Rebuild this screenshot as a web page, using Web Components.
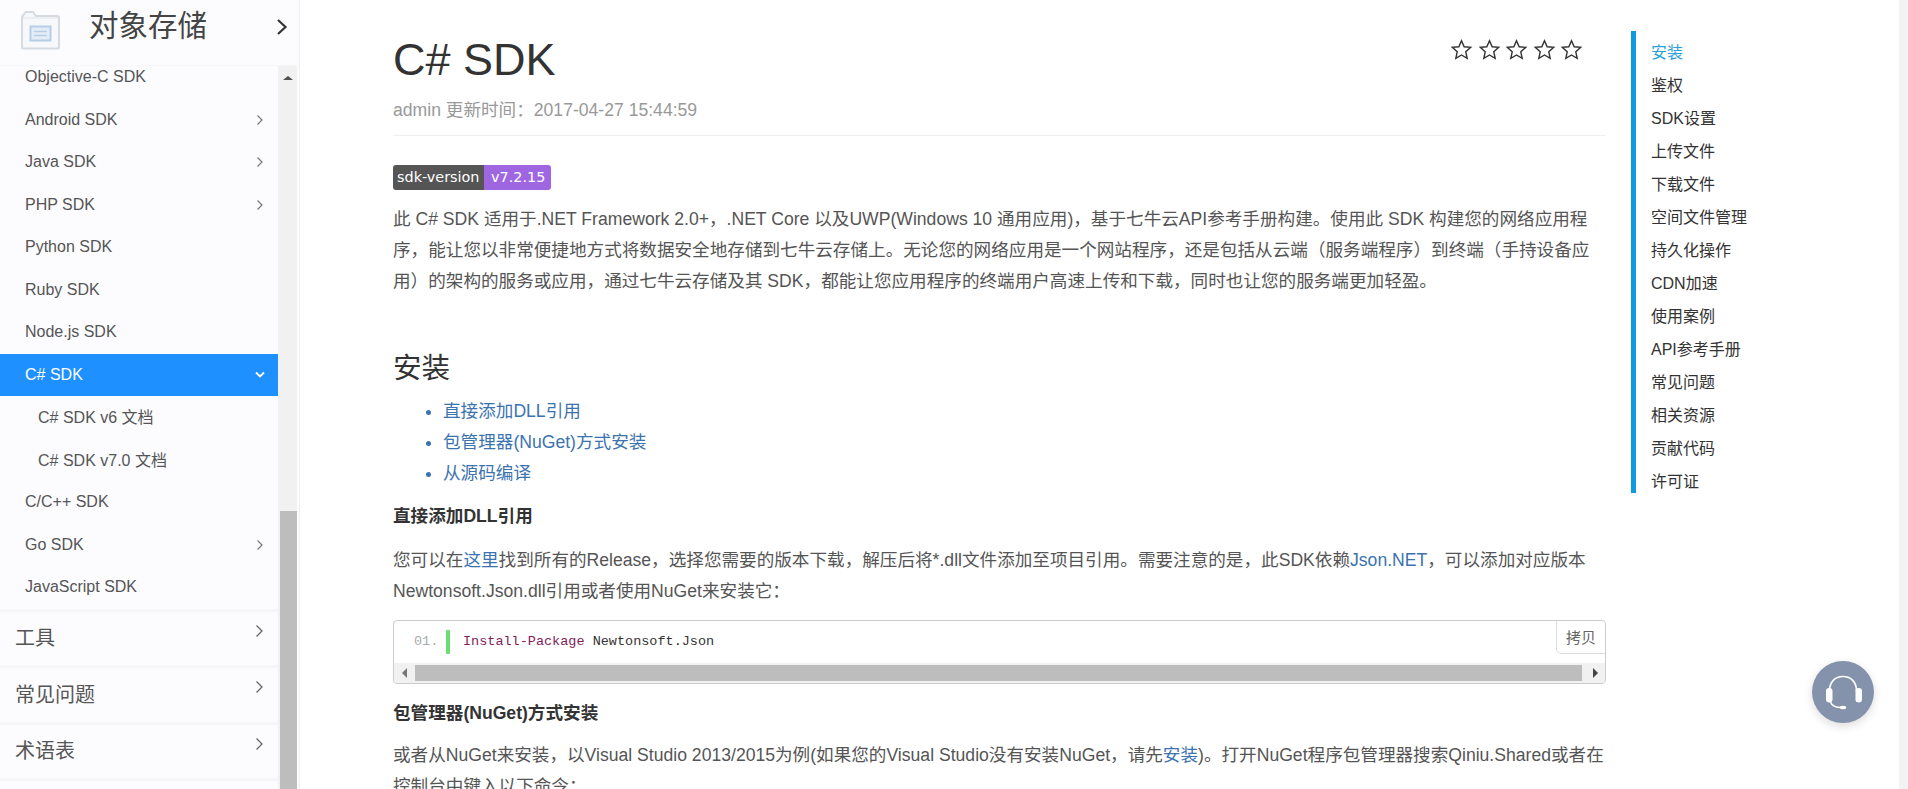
<!DOCTYPE html>
<html lang="zh">
<head>
<meta charset="utf-8">
<title>C# SDK</title>
<style>
  html, body { margin: 0; height: 100%; overflow: hidden; background: #fff; }
  body { font-family: "Liberation Sans", "Noto Sans CJK SC", sans-serif; }
</style>
</head>
<body>
<docs-page>
  <docs-sidebar slot="sidebar" title="对象存储">
    <nav-item>Objective-C SDK</nav-item>
    <nav-item arrow>Android SDK</nav-item>
    <nav-item arrow>Java SDK</nav-item>
    <nav-item arrow>PHP SDK</nav-item>
    <nav-item>Python SDK</nav-item>
    <nav-item>Ruby SDK</nav-item>
    <nav-item>Node.js SDK</nav-item>
    <nav-item active>C# SDK</nav-item>
    <nav-item sub>C# SDK v6 文档</nav-item>
    <nav-item sub>C# SDK v7.0 文档</nav-item>
    <nav-item>C/C++ SDK</nav-item>
    <nav-item arrow>Go SDK</nav-item>
    <nav-item>JavaScript SDK</nav-item>
    <nav-section first>工具</nav-section>
    <nav-section>常见问题</nav-section>
    <nav-section>术语表</nav-section>
  </docs-sidebar>

  <doc-article>
    <doc-title slot="head" meta="admin 更新时间：2017-04-27 15:44:59">C# SDK</doc-title>
    <sdk-badge label="sdk-version" value="v7.2.15"></sdk-badge>
    <doc-para class="intro">此 C# SDK 适用于.NET Framework 2.0+，.NET Core 以及UWP(Windows 10 通用应用)，基于七牛云API参考手册构建。使用此 SDK 构建您的网络应用程<br>序，能让您以非常便捷地方式将数据安全地存储到七牛云存储上。无论您的网络应用是一个网站程序，还是包括从云端（服务端程序）到终端（手持设备应<br>用）的架构的服务或应用，通过七牛云存储及其 SDK，都能让您应用程序的终端用户高速上传和下载，同时也让您的服务端更加轻盈。</doc-para>
    <doc-h2>安装</doc-h2>
    <doc-list>
      <a>直接添加DLL引用</a>
      <a>包管理器(NuGet)方式安装</a>
      <a>从源码编译</a>
    </doc-list>
    <doc-h4>直接添加DLL引用</doc-h4>
    <doc-para>您可以在<a>这里</a>找到所有的Release，选择您需要的版本下载，解压后将*.dll文件添加至项目引用。需要注意的是，此SDK依赖<a>Json.NET</a>，可以添加对应版本<br>Newtonsoft.Json.dll引用或者使用NuGet来安装它：</doc-para>
    <code-block keyword="Install-Package" rest="Newtonsoft.Json"></code-block>
    <doc-h4>包管理器(NuGet)方式安装</doc-h4>
    <doc-para class="tight">或者从NuGet来安装，以Visual Studio 2013/2015为例(如果您的Visual Studio没有安装NuGet，请先<a>安装</a>)。打开NuGet程序包管理器搜索Qiniu.Shared或者在<br>控制台中键入以下命令：</doc-para>
  </doc-article>

  <doc-toc slot="toc">
    <a class="on">安装</a><a>鉴权</a><a>SDK设置</a><a>上传文件</a><a>下载文件</a><a>空间文件管理</a><a>持久化操作</a><a>CDN加速</a><a>使用案例</a><a>API参考手册</a><a>常见问题</a><a>相关资源</a><a>贡献代码</a><a>许可证</a>
  </doc-toc>
</docs-page>
<chat-button></chat-button>

<script>
const TEXT_FONT = '"Liberation Sans", "Noto Sans CJK SC", sans-serif';

class DocsPage extends HTMLElement {
  constructor() {
    super();
    this.attachShadow({ mode: 'open' });
    this.shadowRoot.innerHTML = `
      <style>
        :host { display: flex; height: 789px; overflow: hidden; font-family: ${TEXT_FONT}; }
        .main { flex: 1; display: flex; min-width: 0; padding-left: 93px; }
        .col { width: 1213px; flex: none; }
        .toc { margin-left: 25px; flex: none; }
        .rail { width: 9px; flex: none; background: #f3f3f3; margin-left: auto; }
      </style>
      <slot name="sidebar"></slot>
      <div class="main">
        <div class="col"><slot></slot></div>
        <div class="toc"><slot name="toc"></slot></div>
      </div>
      <div class="rail"></div>
    `;
  }
}

class DocsSidebar extends HTMLElement {
  constructor() {
    super();
    this.attachShadow({ mode: 'open' });
  }

  connectedCallback() {
    const title = this.getAttribute('title');
    this.shadowRoot.innerHTML = `
      <style>
        :host { display: flex; flex-direction: column; width: 299px; flex: none; height: 789px; background: #fcfcff; border-right: 1px solid #f0f0f2; color: #555; }
        .head { height: 66px; flex: none; display: flex; align-items: center; padding-left: 20px; box-sizing: border-box; background: #fcfcfe; border-bottom: 1px solid #f6f6f8; }
        .logo { width: 41px; height: 40px; margin-top: -6px; }
        .title { margin-left: 28px; font-size: 29.500px; line-height: 40px; color: #444; margin-top: -14px; }
        .more { margin-left: auto; margin-right: 11px; margin-top: -12px; width: 12px; height: 18px; }
        .body { flex: 1; display: flex; min-height: 0; }
        .pane { width: 278px; flex: none; overflow: hidden; }
        .list { margin-top: -10px; }
        .bar { width: 19px; flex: none; background: #f1f1f1; position: relative; }
        .arrow { width: 0; height: 0; margin: 10px auto 0; border: 4px solid transparent; border-top: 0; border-bottom: 4px solid #505050; border-left-width: 5px; border-right-width: 5px; }
        .thumb { position: absolute; left: 2px; right: 0; top: 445px; bottom: 0; background: #bdbdbd; }
      </style>
      <div class="head">
        <svg class="logo" viewBox="0 0 41 40">
          <path d="M2 7.500V37a1.500 1.500 0 0 0 1.500 1.500h34A1.500 1.500 0 0 0 39 37V7.500a1.500 1.500 0 0 0-1.500-1.500H16L13 2H6L3.500 4.500z" fill="#f7f8fb" stroke="#d6dbe2" stroke-width="2"/>
          <path d="M3 8h35" stroke="#e2e5ea" stroke-width="1"/>
          <rect x="10.500" y="16.500" width="20" height="14" fill="#e4edf7" stroke="#b6cde6" stroke-width="2"/>
          <path d="M14 21.500h13M14 25.500h13" stroke="#b6cde6" stroke-width="1.500"/>
        </svg>
        <span class="title">${title}</span>
        <svg class="more" viewBox="0 0 12 18"><path d="M2 2l7.500 7L2 16" fill="none" stroke="#333" stroke-width="2.200"/></svg>
      </div>
      <div class="body">
        <div class="pane"><div class="list"><slot></slot></div></div>
        <div class="bar"><div class="arrow"></div><div class="thumb"></div></div>
      </div>
    `;
  }
}

class NavItem extends HTMLElement {
  constructor() {
    super();
    this.attachShadow({ mode: 'open' });
  }

  connectedCallback() {
    const icon = this.hasAttribute('active')
      ? '<svg viewBox="0 0 12 10" width="12" height="10"><path d="M2 2.500l4 4 4-4" fill="none" stroke="#fff" stroke-width="1.800"/></svg>'
      : this.hasAttribute('arrow')
        ? '<svg viewBox="0 0 8 12" width="8" height="12"><path d="M1.500 1.500L6 6l-4.500 4.500" fill="none" stroke="#777" stroke-width="1.200"/></svg>'
        : '';
    this.shadowRoot.innerHTML = `
      <style>
        :host { display: flex; align-items: center; box-sizing: border-box; height: 42.500px; padding: 0 14px 0 25px; font-size: 16px; color: #555; }
        :host([sub]) { padding-left: 38px; padding-bottom: 2px; }
        :host([active]) { background: #1e90ff; color: #fff; padding-right: 12px; }
        .icon { margin-left: auto; display: flex; }
      </style>
      <slot></slot><span class="icon">${icon}</span>
    `;
  }
}

class NavSection extends HTMLElement {
  constructor() {
    super();
    this.attachShadow({ mode: 'open' });
    this.shadowRoot.innerHTML = `
      <style>
        :host { display: flex; align-items: center; height: 50.500px; padding: 0 14px 3px 15px; border-bottom: 3px solid #f6f6f9; font-size: 20px; color: #555; }
        :host([first]) { border-top: 3px solid #f6f6f9; }
        svg { margin-left: auto; margin-top: -12px; }
      </style>
      <slot></slot>
      <svg viewBox="0 0 9 14" width="9" height="14"><path d="M1.500 1.500L7 7l-5.500 5.500" fill="none" stroke="#666" stroke-width="1.300"/></svg>
    `;
  }
}

class DocArticle extends HTMLElement {
  constructor() {
    super();
    this.attachShadow({ mode: 'open' });
    this.shadowRoot.innerHTML = `
      <style>
        :host { display: block; padding-top: 35px; color: #555; font-size: 17.600px; }
      </style>
      <slot name="head"></slot>
      <slot></slot>
    `;
  }
}

class DocTitle extends HTMLElement {
  constructor() {
    super();
    this.attachShadow({ mode: 'open' });
  }

  connectedCallback() {
    const meta = this.getAttribute('meta');
    const star = '<svg viewBox="0 0 24 24" width="23" height="23"><path d="M12 2.800l2.800 6.300 6.800.7-5.100 4.600 1.400 6.800-5.900-3.500-5.900 3.500 1.400-6.800-5.100-4.600 6.800-.7z" fill="none" stroke="#333" stroke-width="1.500" stroke-linejoin="miter"/></svg>';
    this.shadowRoot.innerHTML = `
      <style>
        :host { display: block; padding-bottom: 13px; border-bottom: 1px solid #f0f0f0; }
        .row { display: flex; align-items: flex-start; }
        h1 { margin: 0; font-weight: 400; font-size: 45px; line-height: 50px; color: #333; }
        .stars { margin-left: auto; margin-right: 23px; margin-top: 3px; display: flex; gap: 4.500px; }
        svg { display: block; }
        .meta { margin-top: 13px; font-size: 17.600px; line-height: 24px; color: #999; }
      </style>
      <div class="row">
        <h1><slot></slot></h1>
        <div class="stars">${star.repeat(5)}</div>
      </div>
      <div class="meta">${meta}</div>
    `;
  }
}

class SdkBadge extends HTMLElement {
  constructor() {
    super();
    this.attachShadow({ mode: 'open' });
  }

  connectedCallback() {
    this.shadowRoot.innerHTML = `
      <style>
        :host { display: flex; width: 158px; height: 25px; margin-top: 29px; border-radius: 3px; overflow: hidden; font: 14.400px/25px "DejaVu Sans", sans-serif; color: #fff; }
        .l { background: #555; width: 91px; padding-left: 4px; box-sizing: border-box; }
        .r { background: #9f66e2; flex: 1; padding-left: 7px; }
      </style>
      <span class="l">${this.getAttribute('label')}</span><span class="r">${this.getAttribute('value')}</span>
    `;
  }
}

class DocPara extends HTMLElement {
  constructor() {
    super();
    this.attachShadow({ mode: 'open' });
    this.shadowRoot.innerHTML = `
      <style>
        :host { display: block; margin-top: 13px; font-size: 17.600px; line-height: 31px; color: #555; white-space: nowrap; }
        :host(.intro) { margin-top: 14px; }
        :host(.tight) { margin-top: 11px; }
        ::slotted(a) { color: #3b73af; }
      </style>
      <slot></slot>
    `;
  }
}

class DocH2 extends HTMLElement {
  constructor() {
    super();
    this.attachShadow({ mode: 'open' });
    this.shadowRoot.innerHTML = `
      <style>
        :host { display: block; margin-top: 51px; font-size: 28.600px; line-height: 40px; color: #333; }
      </style>
      <slot></slot>
    `;
  }
}

class DocH4 extends HTMLElement {
  constructor() {
    super();
    this.attachShadow({ mode: 'open' });
    this.shadowRoot.innerHTML = `
      <style>
        :host { display: block; margin-top: 11.500px; font-size: 17.600px; line-height: 31px; font-weight: 700; color: #333; }
      </style>
      <slot></slot>
    `;
  }
}

class DocList extends HTMLElement {
  constructor() {
    super();
    this.attachShadow({ mode: 'open' });
    this.shadowRoot.innerHTML = `
      <style>
        :host { display: flex; flex-direction: column; margin-top: 8px; padding-left: 50px; }
        ::slotted(a) { display: list-item; list-style: disc; line-height: 31px; font-size: 17.600px; color: #3b73af; }
      </style>
      <slot></slot>
    `;
  }
}

class CodeBlock extends HTMLElement {
  constructor() {
    super();
    this.attachShadow({ mode: 'open' });
  }

  connectedCallback() {
    this.shadowRoot.innerHTML = `
      <style>
        :host { display: block; position: relative; margin-top: 13px; margin-bottom: 14px; height: 62px; border: 1px solid #ccc; border-radius: 4px; overflow: hidden; background: #fff; }
        .line { display: flex; align-items: center; height: 42px; font: 13.500px/20px "Liberation Mono", monospace; color: #333; }
        .no { width: 52px; padding-left: 20px; box-sizing: border-box; color: #aaa; }
        .mark { width: 4px; height: 24px; border-radius: 1px; background: #6ddc72; margin-right: 13px; }
        .kw { color: #7f1d5a; margin-right: 8.100px; }
        .scroll { display: flex; align-items: center; height: 20px; background: #f1f1f1; }
        .thumb { flex: 1; height: 16px; background: #bdbdbd; margin: 0 11px 0 2px; }
        .a { width: 0; height: 0; border: 5px solid transparent; }
        .al { border-left: 0; border-right: 5px solid #777; margin-left: 8px; margin-right: 6px; }
        .ar { border-right: 0; border-left: 5px solid #444; margin-right: 7px; }
        .copy { position: absolute; top: -1px; right: -1px; width: 50px; height: 34px; box-sizing: border-box; display: flex; align-items: center; justify-content: center; background: #fff; border: 1px solid #ddd; border-top-right-radius: 4px; border-bottom-left-radius: 5px; font: 15px ${TEXT_FONT}; color: #666; }
      </style>
      <div class="line">
        <span class="no">01.</span><span class="mark"></span><span class="kw">${this.getAttribute('keyword')}</span><span>${this.getAttribute('rest')}</span>
      </div>
      <div class="scroll"><span class="a al"></span><span class="thumb"></span><span class="a ar"></span></div>
      <span class="copy">拷贝</span>
    `;
  }
}

class DocToc extends HTMLElement {
  constructor() {
    super();
    this.attachShadow({ mode: 'open' });
    this.shadowRoot.innerHTML = `
      <style>
        :host { display: flex; flex-direction: column; margin-top: 31px; padding: 5px 0 5px 15px; border-left: 5px solid #0f9ae0; font-size: 16px; color: #333; height: 452px; box-sizing: content-box; }
        ::slotted(a) { display: block; line-height: 33px; }
        ::slotted(a.on) { color: #2d9fd8; }
      </style>
      <slot></slot>
    `;
  }
}

class ChatButton extends HTMLElement {
  constructor() {
    super();
    this.attachShadow({ mode: 'open' });
    this.shadowRoot.innerHTML = `
      <style>
        :host { position: fixed; left: 1812px; top: 661px; width: 62px; height: 62px; border-radius: 50%; background: #8592ab; box-shadow: 0 3px 10px rgba(0,0,0,.14); }
        svg { display: block; }
      </style>
      <svg viewBox="0 0 62 62" width="62" height="62">
        <path d="M17.500 30C17.500 21 23 15.500 31 15.500S44.500 21 44.500 30" fill="none" stroke="#fff" stroke-width="1.600"/>
        <rect x="14" y="27" width="6.500" height="14.500" rx="3.200" fill="#fff"/>
        <rect x="43.500" y="27" width="6.500" height="14.500" rx="3.200" fill="#fff"/>
        <path d="M18.500 41c1 3 5 5.500 11 5.500" fill="none" stroke="#fff" stroke-width="1.500"/>
        <ellipse cx="31" cy="46.500" rx="3.200" ry="1.800" fill="#fff"/>
      </svg>
    `;
  }
}

customElements.define('docs-page', DocsPage);
customElements.define('docs-sidebar', DocsSidebar);
customElements.define('nav-item', NavItem);
customElements.define('nav-section', NavSection);
customElements.define('doc-article', DocArticle);
customElements.define('doc-title', DocTitle);
customElements.define('sdk-badge', SdkBadge);
customElements.define('doc-para', DocPara);
customElements.define('doc-h2', DocH2);
customElements.define('doc-h4', DocH4);
customElements.define('doc-list', DocList);
customElements.define('code-block', CodeBlock);
customElements.define('doc-toc', DocToc);
customElements.define('chat-button', ChatButton);
</script>
</body>
</html>
